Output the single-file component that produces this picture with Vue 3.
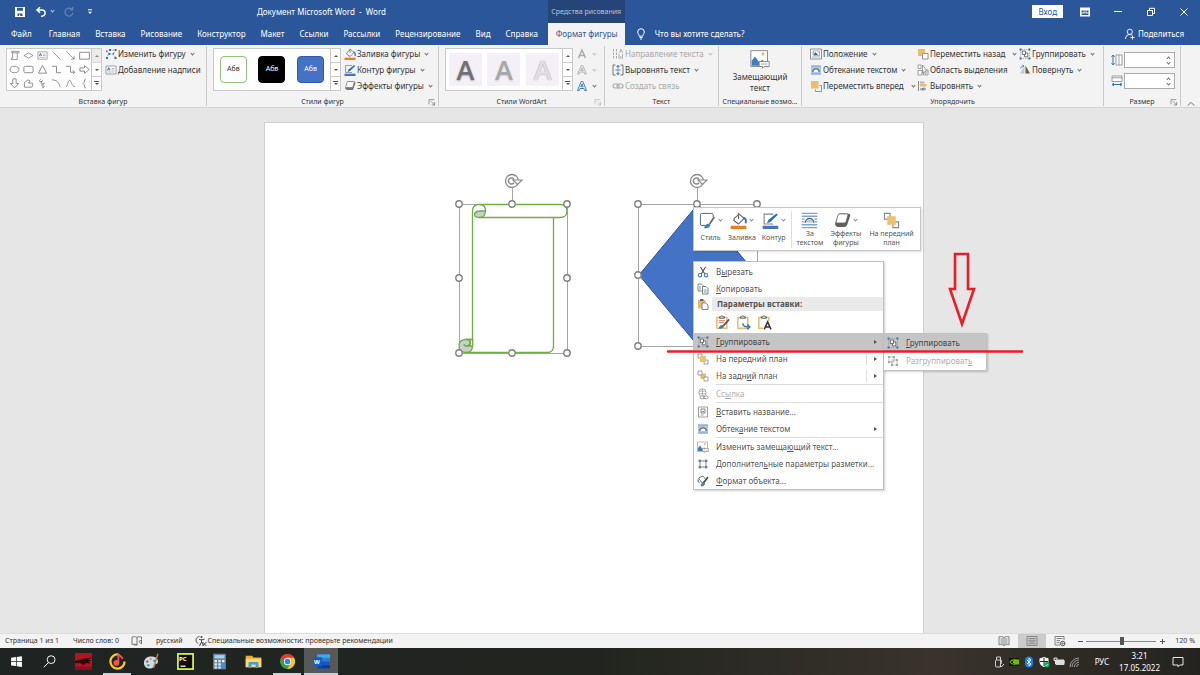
<script setup>
import { ref } from 'vue'

const icons = {
  save: '<path d="M1 1h10v10H1z" fill="#fff"/><path d="M3 1.800h6v3H3zM3.500 7.500h5V10h-5z" fill="#2b579a"/><path d="M5 8.500h1.200V11H5z" fill="#fff"/>',
  undo: '<path d="M5 1.200 2 4l3 2.800M2.300 4H7a3 3 0 0 1 0 6.200H6" fill="none" stroke="#fff" stroke-width="1.5"/>',
  redo: '<path d="M8.800 3.200A4 4 0 1 0 10 6.500M9.600 1v3H6.600" fill="none" stroke="#6484b6" stroke-width="1.2"/>',
  customize: '<path d="M4 3.800h4" stroke="#fff" stroke-width="1"/><path d="M4 5.800h4L6 8z" fill="#fff"/>',
  display: '<path d="M1 1.500h10v9H1z" fill="#fff"/><path d="M2.500 4.500h2v2h-2zM7.500 4.500h2v2h-2zM2.500 7.500h7V9h-7z" fill="#2b579a"/><path d="M6 8.500V4.500M4.500 6 6 4.500 7.500 6" stroke="#2b579a" stroke-width=".8" fill="none"/>',
  minimize: '<path d="M2 5.500h8" stroke="#fff" stroke-width="1"/>',
  restore: '<path d="M2.500 4.500h5v5h-5z" fill="none" stroke="#fff"/><path d="M4.500 4.300v-2h5v5.200h-2" fill="none" stroke="#fff"/>',
  close: '<path d="m2.500 2.500 7 7m0-7-7 7" stroke="#fff" stroke-width="1"/>',
  bulb: '<path d="M4.300 8.200C4.300 6.700 2.700 6 2.700 4a3.300 3.300 0 0 1 6.600 0c0 2-1.600 2.700-1.600 4.200z" fill="none" stroke="#fff" stroke-width="1"/><path d="M4.500 9.500h3M5 11h2" stroke="#fff"/>',
  share: '<circle cx="5.800" cy="3.800" r="2.600" fill="none" stroke="#fff" stroke-width=".9"/><path d="M1.500 11c.2-3 1.800-4.500 4.300-4.500 1 0 1.700.3 2.300.8M8.500 7.500v4M6.500 9.500h4" fill="none" stroke="#fff" stroke-width=".9"/>',
  scroll: '<path d="M3 1.500h8v1.700H9V10.500H2.500V9H4V3H3zM4 3h5" fill="none" stroke="#777" stroke-width=".8"/>',
  diamond: '<path d="m1 6 5-2.800L11 6 6 8.800z" fill="none" stroke="#777" stroke-width=".8"/>',
  textbox: '<path d="M1 2h10v8H1z" fill="#fff" stroke="#888" stroke-width=".8"/><path d="m2.500 6.500 1.300-3 1.300 3M3 5.500h1.600" fill="none" stroke="#2e74b5" stroke-width=".9"/><path d="M6.500 4.500h3M6.500 6h3M2.500 8h7" stroke="#999" stroke-width=".7"/>',
  line: '<path d="m1.500 1.500 9 9" stroke="#777" stroke-width=".8"/>',
  arrowline: '<path d="m1.500 1.500 8.500 8.500M10 6.500V10H6.500" stroke="#777" stroke-width=".8" fill="none"/>',
  rect: '<path d="M.700 2.500h10.600v7.500H.700z" fill="none" stroke="#777" stroke-width=".9"/>',
  oval: '<ellipse cx="6" cy="6" rx="4.800" ry="3.500" fill="none" stroke="#777" stroke-width=".9"/>',
  round: '<rect x="1" y="2.500" width="10" height="7" rx="1.500" fill="none" stroke="#777" stroke-width=".9"/>',
  triangle: '<path d="M6 1.500 10.500 10h-9z" fill="none" stroke="#777" stroke-width=".9"/>',
  elbow: '<path d="M1 2.500h5v7h5" fill="none" stroke="#777" stroke-width=".9"/>',
  elbowarrow: '<path d="M1 2.500h5v6.500h4.500M8.500 7l2 2-2 2" fill="none" stroke="#777" stroke-width=".9"/>',
  blockright: '<path d="M1 4.200h5V1.700L11 6l-5 4.300V7.800H1z" fill="none" stroke="#777" stroke-width=".9"/>',
  blockdown: '<path d="M4.200 1v5H1.500L6 10.800 10.500 6H7.800V1z" fill="none" stroke="#777" stroke-width=".9"/>',
  freeform: '<path d="M1.500 10V5l4-3 2 1-1.500 2.500H10c1 1 1 3.500-.5 4.500z" fill="none" stroke="#777" stroke-width=".9"/>',
  scribble: '<path d="M4 1.500c-4 3 2 3 2 1.500s-3 3-1 3.500 4-2 3-.5-4 1.500-2.500 2.500S9 7.500 7 10.500l-1.500.3" fill="none" stroke="#777" stroke-width=".9"/>',
  arc: '<path d="M1 2c5 0 8 3 9 8" fill="none" stroke="#777" stroke-width=".9"/>',
  curve: '<path d="M1 9.500c2 0 2-7 4-7s2 7 6 7" fill="none" stroke="#777" stroke-width=".9"/>',
  brace: '<path d="M7.500 1C5 1 6.500 5.500 4.500 6 6.500 6.500 5 11 7.500 11" fill="none" stroke="#777" stroke-width=".9"/>',
  editshape: '<path d="M1.500 10 4 6 2.500 3M5 2h6M11 2 8 6l3 4" fill="none" stroke="#7f8b99" stroke-width=".8" stroke-dasharray="1.500 1"/><path d="M1 9h2v2H1zM3.500 5h2v2h-2zM4 1h2v2H4zM9.500 1h2v2h-2zM7.500 5h1.500v1.500H7.500zM9.500 9h2v2h-2zM1 2.500h1.500V4H1z" fill="#2e74b5"/>',
  bucket: '<path d="M3 4.500 6.500 1.500l3.500 3L6 8.500 2.700 6z" fill="#fff" stroke="#666" stroke-width=".8"/><path d="M6 5V.700" stroke="#666" stroke-width=".8"/><path d="M9.500 4c1.500.5 2 2 1.500 4" stroke="#2e74b5" stroke-width="1.300" fill="none"/><path d="M.5 9.700h11v2.300H.5z" fill="#ee7d1e"/>',
  pen: '<path d="M8 1.500H1.500V8.500H8" fill="none" stroke="#888" stroke-width=".8"/><path d="m3.500 8 1-2.500 5.700-4.500 1 1L6 7z" fill="#2e74b5"/><path d="M.5 9.700h11v2.300H.5z" fill="#4472c4"/>',
  effects: '<path d="M4 1.500h6.500L11.500 3 9 10H3L1 8.500z" fill="#777"/><path d="M4 1.500h5.500q1 0 .7 1L9 6.500q-.3 1-1.300 1H2.500q-1 0-.7-1L3 2.500q.2-1 1-1z" fill="#fff" stroke="#777" stroke-width=".8"/>',
  wafill: '<path d="M2.500 10 6 2l3.500 8M4 7.500h4" fill="none" stroke="#aaa" stroke-width="1.500"/>',
  waline: '<path d="M1.500 10 5.200 1.500h1.600L10.500 10H8.700L8 8H4l-.7 2zM4.800 6.500h2.400L6 3.800z" fill="#eee" stroke="#aaa" stroke-width=".8"/>',
  waglow: '<path d="M1.500 10.500 5.200 1.500h1.600L10.500 10.500H8.700L8 8.500H4l-.7 2zM4.800 6.800h2.400L6 3.800z" fill="#fff" stroke="#3f7dc1" stroke-width="1"/>',
  direction: '<path d="M1.500 1v10M4.500 1v10" stroke="#aaa" stroke-dasharray="2.500 1"/><path d="M7.500 5 9 1l1.500 4M7 11V6M10.500 6v5M8.800 11V8" fill="none" stroke="#aaa" stroke-width=".9"/>',
  aligntext: '<path d="M3.500 1H1v10h2.500M8.500 1H11v10H8.500" fill="none" stroke="#666" stroke-width=".9"/><path d="M6 1v3.500M6 11V7.500M4.500 3 6 1.500 7.500 3M4.500 9 6 10.500 7.500 9" fill="none" stroke="#2e74b5"/><path d="M3.500 6h5" stroke="#666"/>',
  link: '<rect x="1" y="4" width="6" height="4" rx="2" fill="none" stroke="#aaa" stroke-width="1.200"/><rect x="5" y="4" width="6" height="4" rx="2" fill="none" stroke="#aaa" stroke-width="1.200"/>',
  alttext: '<path d="M.5 1h10v9.500H.5z" fill="#fff" stroke="#777" stroke-width=".5"/><path d="M1 10V7l2-2.500L5.500 8l1.800-1.500L9 8v2z" fill="#3f7dc1"/><circle cx="7.800" cy="3" r="1" fill="#eebb6c"/><path d="M5.500 7.500h6v3h-3l-1 1v-1h-2z" fill="#fff" stroke="#777" stroke-width=".5"/><path d="M6.500 9h4" stroke="#999" stroke-width=".5"/>',
  position: '<path d="M.5 1h11v10H.5z" fill="#fff" stroke="#777" stroke-width=".8"/><path d="M2 4h1M2 6h1M2 9h8" stroke="#999" stroke-width=".8"/><path d="M3.500 2.800h6v4.700h-6z" fill="#fff" stroke="#6a9bd0" stroke-width=".7"/><path d="M4 7V5.500L5.500 4 8 7z" fill="#2e74b5"/><circle cx="8" cy="4" r=".7" fill="#eebb6c"/>',
  wrap: '<path d="M1 1.500h10v9H1z" fill="#a9c5e6"/><path d="M1 2h10M1 10h10" stroke="#7ea6d4"/><path d="M3 8V6.500Q6 3 9 6.500V8" fill="#fff" stroke="#555" stroke-width="1.100"/>',
  forward: '<path d="M1 1h7.500v7.500H1z" fill="#eebb6c"/><path d="M9.500 5.500H11.500V11.500H5.500V9.500" fill="none" stroke="#888" stroke-width=".9"/>',
  backward: '<path d="M1 1h7v4H5v3H1z" fill="#eebb6c"/><path d="M5.500 5.500H11V11H5.500z" fill="#fff" stroke="#888" stroke-width=".9"/>',
  pane: '<path d="M1 1h3v3.500H1zM1 6.500h4V11H1zM6.500 6h4.500v5H6.500z" fill="#fff" stroke="#888" stroke-width=".8"/><path d="M5.500 1v8l1.700-1.600L8.500 10l1-.6-1.300-2.400h2z" fill="#fff" stroke="#777" stroke-width=".7"/>',
  align: '<path d="M1.500 1v10" stroke="#888"/><path d="M3 1.500h4.500v2H3zM3 8h3.500v2.500H3z" fill="#b6b6b6"/><path d="M3 4h6.500v2.500H3z" fill="#eebb6c"/><path d="M5.500 9H9M7 7.500 5.500 9 7 10.500" stroke="#2e74b5" fill="none"/>',
  group: '<path d="M1.500 1.500h9v9h-9z" fill="none" stroke="#888" stroke-width=".6" stroke-dasharray="1 .8"/><path d="M5.500 5h3.300v3.800H5.500z" fill="#fff" stroke="#555" stroke-width=".8"/><path d="M3.300 3h3.200v3.500H3.300z" fill="#fff" stroke="#555" stroke-width=".8"/><path d="M.6.600h2v2h-2zM9.400.600h2v2h-2zM.6 9.400h2v2h-2zM9.400 9.400h2v2h-2z" fill="#2e74b5"/>',
  ungroup: '<path d="M2 2h5v5H2zM5 5h5v5H5z" fill="none" stroke="#aaa" stroke-width=".8"/><path d="M1 1h2v2H1zM6 1h2v2H6zM1 6h2v2H1zM9 4h2v2H9zM4 9h2v2H4zM9 9h2v2H9z" fill="#a4a4a4"/>',
  rotate: '<path d="M1 9.500 5.500 2v7.500z" fill="#c8c8c8"/><path d="M6.500 1.500 11 9.500H6.500z" fill="#606060"/><path d="M1.500 4.500C2 2.500 3 2 4.500 2M3.500.800l1.500 1.200-1.500 1.300" fill="none" stroke="#2e74b5" stroke-width=".8"/>',
  height: '<path d="M5 1h6v10H5zM8 1v10" fill="#fff" stroke="#888" stroke-width=".8"/><path d="M2 1.500v9M.5 3 2 1l1.500 2M.5 9 2 11l1.500-2" fill="none" stroke="#2e74b5"/>',
  width: '<path d="M1 1h10v5.500H1zM1 2.800h10" fill="#fff" stroke="#888" stroke-width=".8"/><path d="M1.500 9.500h9M3 8 1 9.500 3 11M9 8l2 1.500L9 11" fill="none" stroke="#2e74b5"/>',
  launcher: '<path d="M1.500 9.500v-7h8" fill="none" stroke="#666" stroke-width="1"/><path d="m4.500 5 5 5M10 6v4.500H5.500" fill="none" stroke="#666"/>',
  cut: '<path d="m3.500 1 4.300 7M8.500 1 4.200 8" stroke="#555" stroke-width="1.200"/><circle cx="3" cy="9.200" r="1.700" fill="none" stroke="#3f7dc1" stroke-width="1.100"/><circle cx="9" cy="9.200" r="1.700" fill="none" stroke="#3f7dc1" stroke-width="1.100"/>',
  copy: '<path d="M1 1h3.500L6 2.500V8H1z" fill="#fff" stroke="#666" stroke-width=".8"/><path d="M5.500 3.500H9L11 5.500V11H5.500z" fill="#fff" stroke="#666" stroke-width=".8"/><path d="M2 4h2M2 6h2M6.700 7h3M6.700 9h3" stroke="#3f7dc1" stroke-width=".8"/>',
  paste: '<path d="M1 2h7.500v8.500H1z" fill="#e9b96e"/><path d="M3 1h3.500v2H3z" fill="#666"/><path d="M5 5h3.500L11 7v4.500H5z" fill="#fff" stroke="#777" stroke-width=".9"/>',
  pasteformat: '<path d="M1.500 2h8v8.500h-8z" fill="#fff" stroke="#e9b96e" stroke-width="1.200"/><path d="M3.500 2.500v-1h1L5.500.400l1 1.100h1v1z" fill="#fff" stroke="#555" stroke-width=".8"/><path d="M3 4.500h5M3 6h4" stroke="#ea8e7a"/><path d="m11.300 3.500-4.500 5" stroke="#555" stroke-width="1.400"/><path d="M3 11c0-2 1.500-3.500 4-3l.5 1C6 11 5 11 3 11z" fill="#3f7dc1"/>',
  pastemerge: '<path d="M1.500 2h8v8.500h-8z" fill="#fff" stroke="#e9b96e" stroke-width="1.200"/><path d="M3.500 2.500v-1h1L5.500.400l1 1.100h1v1z" fill="#fff" stroke="#555" stroke-width=".8"/><path d="M5.500 6.500c0 2.500 1.500 3 5 3M9 7.500l2 2-2 2" fill="none" stroke="#3f7dc1" stroke-width="1.300"/>',
  pastetext: '<path d="M1.500 2h8v8.500h-8z" fill="#fff" stroke="#e9b96e" stroke-width="1.200"/><path d="M3.500 2.500v-1h1L5.500.400l1 1.100h1v1z" fill="#fff" stroke="#555" stroke-width=".8"/><path d="M5 5h7v7H5z" fill="#fff"/><path d="m5.800 11.500 2.700-6 2.700 6M6.800 9.500h3.400" fill="none" stroke="#333" stroke-width="1.200"/>',
  tofront: '<path d="M1 1h4v4H1zM7 7h4v4H7z" fill="#fff" stroke="#888" stroke-width=".8"/><path d="M3 3h6v6H3z" fill="#edbf6e"/>',
  toback: '<path d="M3.500 3.500h5.500v5.500H3.500z" fill="#eebb6c"/><path d="M1 1h4v4H1zM7 7h4v4H7z" fill="#fff" stroke="#888" stroke-width=".8"/>',
  hyperlink: '<circle cx="5.500" cy="4.500" r="3.700" fill="none" stroke="#999" stroke-width=".8"/><path d="M2 3.200h7M2 5.800h7M5.500 1v7" stroke="#999" stroke-width=".7"/><path d="M2.500 7.500h8.500v3.500H2.500z" fill="#fff"/><rect x="3" y="8" width="4.500" height="2.700" rx="1.300" fill="none" stroke="#999"/><rect x="6.500" y="8" width="4.500" height="2.700" rx="1.300" fill="none" stroke="#999"/>',
  caption: '<path d="M1.500 1h9v10h-9z" fill="#fff" stroke="#888" stroke-width=".8"/><path d="M4 3h4v4H4z" fill="none" stroke="#666" stroke-width=".8"/><path d="M3.500 9h3" stroke="#888" stroke-width=".8"/><path d="M5 5.500h2" stroke="#c0504d" stroke-width=".8"/>',
  layout: '<path d="M1 3h10M1 9h10M3 1v10M9 1v10" stroke="#666" stroke-width=".8"/><path d="M2 2h2v2H2zM8 2h2v2H8zM2 8h2v2H2zM8 8h2v2H8z" fill="#5b87b8"/>',
  format: '<path d="M1.500 3 6 1l3 4-4 3z" fill="#fff" stroke="#666" stroke-width=".9"/><path d="M11 2 6.500 8" stroke="#444" stroke-width="1.500"/><path d="M1 4c-.5 3 .5 3.500 1.500 3.500M4 11c0-2 1-3.500 3-3l.7 1C7 11 6 11 4 11z" fill="#3f7dc1" stroke="#3f7dc1" stroke-width=".6"/>',
  style: '<path d="M5 9.500H2q-1 0-1-1V2q0-1 1-1h7q1 0 1 1v1.500" fill="none" stroke="#666" stroke-width=".7"/><path d="m10.800 3.500-3.300 5" stroke="#666" stroke-width="1.200"/><path d="M3.500 11.500C4 9.500 5.500 8 7.300 8.300l.8.800C7.500 11 6 11.500 3.500 11.500z" fill="#3f7dc1"/>',
  behind: '<path d="M.5 1h11M.5 3h11M.5 5h2M9.500 5h2M.5 7h2M9.500 7h2M.5 9h11M.5 11h11" stroke="#76a5d6" stroke-width=".9"/><path d="M3 7.500a3 3 0 0 1 6 0" fill="#b7cde5" stroke="#666" stroke-width=".9"/>',
  bevel: '<path d="M3.500 1h6q2 0 2 1.500L9.500 8.500Q9 10.500 7 10.500H2.500Q.5 10 .8 8z" fill="#606060"/><path d="M4 1.300h5q1 0 .8 1L8.500 6.800q-.3 1-1.300 1H2.300q-1 0-.8-1L2.800 2.300q.3-1 1.200-1z" fill="#fff" stroke="#666" stroke-width=".6"/>',
  proof: '<path d="M6 2.500C4.500 1.500 2.500 1.500 1 2v7.500c1.500-.5 3.500-.5 5 .5V2.500c1-.7 2-1 4.500-.5v2.500M3 10h3" fill="none" stroke="#555" stroke-width=".8"/><path d="M8 6.500 10.500 5v4z" fill="none" stroke="#555" stroke-width=".8"/>',
  access: '<path d="M4.500 1.500C2 1.800 1 3.500 1 5s.8 3 2.500 3.800" fill="none" stroke="#555"/><circle cx="6.500" cy="2" r="1" fill="#444"/><path d="M4 4.200c2 .7 3.500.7 5.500 0M6.500 4.500V7L4.500 11M6.500 7l2.500 4M7.500 7l4 4M11.500 7l-4 4" fill="none" stroke="#444"/>',
  read: '<path d="M6 2.500v8M6 2.500C4.500 1.500 3 1.500 1 1.800v8c2-.3 3.500-.3 5 .7 1.500-1 3-1 5-.7v-8c-2-.3-3.500-.3-5 .7zM2.500 4H5M2.500 6H5M2.500 8H5M7 4h2.500M7 6h2.500M7 8h2.500" fill="none" stroke="#666" stroke-width=".8"/>',
  print: '<path d="M1 1.500h10v9H1zM2.500 3.500h7M2.500 5.300h7M2.500 7h7M2.500 8.800h7" fill="none" stroke="#777" stroke-width=".8"/>',
  web: '<path d="M6 10H1V1.500h9V5M2.500 3.500h6M2.500 5.500H6M2.500 7.500h3" fill="none" stroke="#666" stroke-width=".8"/><circle cx="8.700" cy="8.500" r="2.300" fill="#fff" stroke="#555"/><path d="M6.500 8.500h4.500M8.700 6.500v4" stroke="#555" stroke-width=".6"/>',
  windows: '<path d="M1 2.500 5.500 1.900v3.800H1zM6.200 1.800 11 1.100v4.600H6.200zM1 6.400h4.500v3.800L1 9.600zM6.200 6.400H11V11l-4.800-.7z" fill="#fff"/>',
  search: '<circle cx="7.500" cy="4.300" r="3.600" fill="none" stroke="#fff" stroke-width=".9"/><path d="M5 7 .800 11.300" stroke="#fff" stroke-width=".9"/>',
  raven: '<path d="M0 0h12v12H0z" fill="#b51222"/><path d="M0 6c1.500-1.500 3-1 4.500-1.500C7 3.200 9 4 12 3L9.500 4.800l2 .7-2 .5 1.500 1.600L8 7 6 8.500 4 7.300 0 7z" fill="#2b0509"/><path d="M0 9.500h12V12H0z" fill="#8d0d19"/>',
  music: '<path d="M6.500 1A5 5 0 1 0 11 6" fill="none" stroke="#ffcc1e" stroke-width="1.600"/><circle cx="5.200" cy="7" r="2" fill="#f2534a"/><path d="M6.600 7V.500C7 2.300 9.500 2 9.500 4.300" fill="none" stroke="#f2534a" stroke-width="1.300"/>',
  paint: '<path d="M.700 7c0-3 2.500-5 5.800-4.500 3 .5 4.500 2 4 4-.3 1.500-2 1-2.500 2-.7 1.300-1 2.500-3 2.500C2.500 11 .700 9.500.700 7z" fill="#c7dfee"/><circle cx="3" cy="6" r=".9" fill="#e2503c"/><circle cx="5.500" cy="4.300" r=".9" fill="#f0a62a"/><circle cx="3.700" cy="8.700" r=".9" fill="#54a855"/><circle cx="8" cy="5.500" r=".8" fill="#357bc8"/><path d="M10.500.500 7.500 10.500" stroke="#bd7a3b" stroke-width="1.100"/>',
  calc: '<path d="M1.500.500h9v11h-9z" fill="#68829a"/><path d="M2.500 1.500h7v2.300h-7z" fill="#9fd3f0"/><path d="M2.500 5h1.700v1.500H2.500zM5.200 5h1.700v1.500H5.200zM2.500 7.300h1.700v1.500H2.500zM5.200 7.300h1.700v1.500H5.200zM2.500 9.500h1.700V11H2.500zM5.200 9.500h1.700V11H5.200zM7.800 5h1.700v1.500H7.800z" fill="#e4edf4"/><path d="M7.800 7.300h1.700V11H7.800z" fill="#3496dd"/>',
  folder: '<path d="M.5 2h4.500l1 1.200h5.500V10H.5z" fill="#e9ae36"/><path d="M.5 4h11v6H.5z" fill="#fbd775"/><path d="M2.500 10.500V7q0-.7.700-.7h5.600q.7 0 .7.700v3.500h-2V8.200h-3v2.300z" fill="#3d9fdc"/>',
  chrome: '<circle cx="6" cy="6" r="5.300" fill="#34a04d"/><path d="M1.400 3.300A5.300 5.300 0 0 1 10.600 3.300H6L3.700 7.300z" fill="#e23c31"/><path d="M10.600 3.300A5.300 5.300 0 0 1 5.800 11.300L8.300 7.300 6 3.300z" fill="#fbc41e"/><circle cx="6" cy="6" r="2.600" fill="#fff"/><circle cx="6" cy="6" r="2" fill="#3b7de6"/>',
  usb: '<path d="M3.500 4h4v7h-4q-1 0-1-1V5q0-1 1-1zM3.500 4V1h4v3h.8v4" fill="none" stroke="#ddd" stroke-width=".9"/><path d="m7 9.500 1.300 1.500L11 8" fill="none" stroke="#ddd"/>',
  nvidia: '<path d="M1 2h10v8H1z" fill="#101a08"/><path d="M2 6c1.500-2.500 5-3 8-.5C8 9 4 9 2 6z" fill="none" stroke="#76b900" stroke-width="1.100"/><path d="M6 3.500h5v5H6z" fill="#76b900"/><circle cx="6" cy="6" r="1.300" fill="#76b900"/>',
  bluetooth: '<rect x="2" y=".5" width="8" height="11" rx="4" fill="#1281e8"/><path d="m4 4 4 4-2 2V2l2 2-4 4" fill="none" stroke="#fff" stroke-width=".9"/>',
  shield: '<path d="M6 1l4.500 1.500v3C10.500 8.500 8 10.500 6 11 4 10.500 1.500 8.500 1.500 5.500v-3z" fill="#fff"/><path d="M6 2v8M2 5.500h8" stroke="#25251f"/><circle cx="8.800" cy="8.800" r="2.700" fill="#18a45a"/><path d="m7.500 8.800 1 1 1.700-1.800" stroke="#fff" fill="none" stroke-width=".8"/>',
  battery: '<path d="M3 4h8v4.500H3z" fill="#ddd" stroke="#ddd"/><path d="M11.500 5.500h.5v1.500h-.5z" fill="#ddd"/><path d="M1 2h3v2.500H1zM2.500 4.500V8" stroke="#fff" fill="#555" stroke-width=".8"/>',
  wifi: '<path d="M2 11A9 9 0 0 1 11 2M4 11a7 7 0 0 1 7-7M6.300 11A4.700 4.700 0 0 1 11 6.300M8.500 11A2.500 2.500 0 0 1 11 8.500" fill="none" stroke="#bbb" stroke-width=".8"/>',
  notice: '<path d="M1 1.500h10v7.500H7.500L6 10.700V9H1z" fill="none" stroke="#fff" stroke-width=".9"/>',
  pycharm: '<path d="M0 0h12v12H0z" fill="#cfe84a"/><path d="M1.300 1.300h9.400v9.400H1.300z" fill="#0b0b0b"/><path d="M2.500 9.300h3.500" stroke="#fff" stroke-width=".9"/>',
  word: '<path d="M3 1h9v10H3z" fill="#2b7cd3"/><path d="M3 1h9v2.500H3z" fill="#41a5ee"/><path d="M3 8.500h9V11H3z" fill="#103f91"/><path d="M3 6h9v2.500H3z" fill="#185abd"/><path d="M0 3h6.500v6.500H0z" fill="#185abd"/>'
}

const tabs = ['Главная', 'Вставка', 'Рисование', 'Конструктор', 'Макет', 'Ссылки', 'Рассылки', 'Рецензирование', 'Вид', 'Справка']
const shapes = ['scroll', 'diamond', 'textbox', 'line', 'arrowline', 'rect', 'oval', 'round', 'triangle', 'elbow', 'elbowarrow', 'blockright', 'blockdown', 'freeform', 'scribble', 'arc', 'curve', 'brace']
const insertCmds = [{ icon: 'editshape', text: 'Изменить фигуру', arrow: true }, { icon: 'textbox', text: 'Добавление надписи' }]
const styleCmds = [{ icon: 'bucket', text: 'Заливка фигуры', arrow: true }, { icon: 'pen', text: 'Контур фигуры', arrow: true }, { icon: 'effects', text: 'Эффекты фигуры', arrow: true }]
const wordArtCmds = [{ icon: 'wafill', label: 'Заливка текста', off: true }, { icon: 'waline', label: 'Контур текста', off: true }, { icon: 'waglow', label: 'Текстовые эффекты' }]
const textCmds = [{ icon: 'direction', text: 'Направление текста', arrow: true, off: true }, { icon: 'aligntext', text: 'Выровнять текст', arrow: true }, { icon: 'link', text: 'Создать связь', off: true }]
const arrange = [
  [{ icon: 'position', text: 'Положение', arrow: true }, { icon: 'wrap', text: 'Обтекание текстом', arrow: true }, { icon: 'forward', text: 'Переместить вперед', arrow: true, split: true }],
  [{ icon: 'backward', text: 'Переместить назад', arrow: true, split: true }, { icon: 'pane', text: 'Область выделения' }, { icon: 'align', text: 'Выровнять', arrow: true }],
  [{ icon: 'group', text: 'Группировать', arrow: true }, { icon: 'rotate', text: 'Повернуть', arrow: true }]
]
const mini = [
  { icon: 'style', lines: ['Стиль'], arrow: true },
  { icon: 'bucket', lines: ['Заливка'], arrow: true },
  { icon: 'pen', lines: ['Контур'], arrow: true },
  { icon: 'behind', lines: ['За', 'текстом'], first: true },
  { icon: 'bevel', lines: ['Эффекты', 'фигуры'], arrow: true },
  { icon: 'tofront', lines: ['На передний', 'план'] }
]
/* each label is split as [before, access key, after] */
const menuTop = [
  { icon: 'cut', t: ['В', 'ы', 'резать'] },
  { icon: 'copy', t: ['', 'К', 'опировать'] }
]
const menuRest = [
  { icon: 'group', t: ['', 'Г', 'руппировать'], sub: true, on: true },
  { icon: 'tofront', t: ['На пере', 'д', 'ний план'], sub: true, split: true },
  { icon: 'toback', t: ['На задн', 'и', 'й план'], sub: true, split: true },
  { icon: 'hyperlink', t: ['Сс', 'ы', 'лка'], off: true, sep: true },
  { icon: 'caption', t: ['', 'В', 'ставить название...'], sep: true },
  { icon: 'wrap', t: ['Обтек', 'а', 'ние текстом'], sub: true },
  { icon: 'alttext', t: ['Изменить замеща', 'ю', 'щий текст...'], sep: true },
  { icon: 'layout', t: ['Дополнител', 'ь', 'ные параметры разметки...'] },
  { icon: 'format', t: ['', 'Ф', 'ормат объекта...'] }
]
const submenu = [
  { icon: 'group', t: ['', 'Г', 'руппировать'], on: true },
  { icon: 'ungroup', t: ['Разгруппироват', 'ь', ''], off: true }
]
const apps = [
  { icon: 'windows', name: 'Пуск' },
  { icon: 'search', name: 'Поиск' },
  { icon: 'raven', name: 'Игра', big: true },
  { icon: 'music', name: 'Музыка', big: true, run: true },
  { icon: 'paint', name: 'Paint', big: true },
  { icon: 'pycharm', name: 'PyCharm', big: true, mark: 'PC' },
  { icon: 'calc', name: 'Калькулятор', big: true },
  { icon: 'folder', name: 'Проводник', big: true },
  { icon: 'chrome', name: 'Chrome', big: true, run: true },
  { icon: 'word', name: 'Word', big: true, active: true, mark: 'W' }
]
const tray = ['usb', 'nvidia', 'bluetooth', 'shield', 'battery', 'wifi']
const handles = [[195, 82], [248, 82], [303, 82], [195, 156], [303, 156], [195, 231], [248, 231], [303, 231], [374, 82], [433, 82], [493, 82], [374, 153], [374, 224]]
const zoom = ref(120)
const heightValue = ref('')
const widthValue = ref('')
</script>

<template>
  <div class="app">
    <header class="head">
      <div class="title-row">
        <div class="quick">
          <button aria-label="Сохранить"><svg class="ic" viewBox="0 0 12 12" v-html="icons.save" /></button>
          <button aria-label="Отменить"><svg class="ic" viewBox="0 0 12 12" v-html="icons.undo" /><i class="chev" /></button>
          <button aria-label="Повторить"><svg class="ic" viewBox="0 0 12 12" v-html="icons.redo" /></button>
          <button aria-label="Настройка панели"><svg class="ic" viewBox="0 0 12 12" v-html="icons.customize" /></button>
        </div>
        <div class="doc-title">Документ Microsoft Word&nbsp; -&nbsp; Word</div>
        <div class="window-tools">
          <button class="login">Вход</button>
          <button v-for="n in ['display', 'minimize', 'restore', 'close']" :key="n" class="win" :aria-label="n">
            <svg class="ic" viewBox="0 0 12 12" v-html="icons[n]" />
          </button>
        </div>
      </div>
      <nav class="tabs">
        <button class="tab file">Файл</button>
        <button v-for="t in tabs" :key="t" class="tab">{{ t }}</button>
        <div class="context">
          <span class="context-name">Средства рисования</span>
          <button class="context-tab">Формат фигуры</button>
        </div>
        <button class="tell"><svg class="ic" viewBox="0 0 12 12" v-html="icons.bulb" />Что вы хотите сделать?</button>
        <button class="share"><svg class="ic" viewBox="0 0 12 12" v-html="icons.share" />Поделиться</button>
      </nav>
    </header>

    <section class="ribbon">
      <div class="rgroup">
        <div class="rbody">
          <div class="gallery">
            <div class="shapes">
              <button v-for="s in shapes" :key="s" :aria-label="s"><svg class="ic small" viewBox="0 0 12 12" v-html="icons[s]" /></button>
            </div>
            <div class="scroller"><button class="dim" aria-label="Вверх"><i class="tri up" /></button><button aria-label="Вниз"><i class="tri" /></button><button aria-label="Ещё"><i class="tri more" /></button></div>
          </div>
          <div class="cmds">
            <button v-for="c in insertCmds" :key="c.text" class="cmd"><svg class="ic" viewBox="0 0 12 12" v-html="icons[c.icon]" />{{ c.text }}<i v-if="c.arrow" class="chev" /></button>
          </div>
        </div>
        <div class="rlabel">Вставка фигур</div>
      </div>

      <div class="rgroup">
        <div class="rbody">
          <div class="gallery wide">
            <div class="styles">
              <button class="preset outline">Абв</button>
              <button class="preset black">Абв</button>
              <button class="preset blue">Абв</button>
            </div>
            <div class="scroller"><button aria-label="Вверх"><i class="tri up" /></button><button aria-label="Вниз"><i class="tri" /></button><button aria-label="Ещё"><i class="tri more" /></button></div>
          </div>
          <div class="cmds">
            <button v-for="c in styleCmds" :key="c.text" class="cmd"><svg class="ic" viewBox="0 0 12 12" v-html="icons[c.icon]" />{{ c.text }}<i class="chev" /></button>
          </div>
        </div>
        <div class="rlabel">Стили фигур<button class="launch" aria-label="Параметры стиля"><svg viewBox="0 0 12 12" v-html="icons.launcher" /></button></div>
      </div>

      <div class="rgroup">
        <div class="rbody">
          <div class="gallery wide">
            <div class="arts">
              <button class="art a1">A</button>
              <button class="art a2">A</button>
              <button class="art a3">A</button>
            </div>
            <div class="scroller"><button aria-label="Вверх"><i class="tri up" /></button><button aria-label="Вниз"><i class="tri" /></button><button aria-label="Ещё"><i class="tri more" /></button></div>
          </div>
          <div class="cmds">
            <button v-for="c in wordArtCmds" :key="c.icon" class="cmd" :class="{ off: c.off }" :aria-label="c.label"><svg class="ic" viewBox="0 0 12 12" v-html="icons[c.icon]" /><i class="chev" /></button>
          </div>
        </div>
        <div class="rlabel">Стили WordArt<button class="launch faint" aria-label="Параметры WordArt"><svg viewBox="0 0 12 12" v-html="icons.launcher" /></button></div>
      </div>

      <div class="rgroup">
        <div class="rbody">
          <div class="cmds flush">
            <button v-for="c in textCmds" :key="c.text" class="cmd" :class="{ off: c.off }"><svg class="ic" viewBox="0 0 12 12" v-html="icons[c.icon]" />{{ c.text }}<i v-if="c.arrow" class="chev" /></button>
          </div>
        </div>
        <div class="rlabel">Текст</div>
      </div>

      <div class="rgroup">
        <div class="rbody centered">
          <button class="tall"><svg viewBox="0 0 12 12" v-html="icons.alttext" /><span>Замещающий<br>текст</span></button>
        </div>
        <div class="rlabel">Специальные возмо...</div>
      </div>

      <div class="rgroup">
        <div class="rbody arrange">
          <div v-for="(col, i) in arrange" :key="i" class="cmds flush">
            <button v-for="c in col" :key="c.text" class="cmd"><svg class="ic" viewBox="0 0 12 12" v-html="icons[c.icon]" />{{ c.text }}<i v-if="c.arrow" class="chev" :class="{ split: c.split }" /></button>
          </div>
        </div>
        <div class="rlabel">Упорядочить</div>
      </div>

      <div class="rgroup">
        <div class="rbody sizes">
          <label><svg class="ic" viewBox="0 0 12 12" v-html="icons.height" /><span class="spin"><input v-model="heightValue" type="text" aria-label="Высота"><span class="steps"><i class="chev up" /><i class="chev" /></span></span></label>
          <label><svg class="ic" viewBox="0 0 12 12" v-html="icons.width" /><span class="spin"><input v-model="widthValue" type="text" aria-label="Ширина"><span class="steps"><i class="chev up" /><i class="chev" /></span></span></label>
        </div>
        <div class="rlabel">Размер<button class="launch" aria-label="Параметры размера"><svg viewBox="0 0 12 12" v-html="icons.launcher" /></button></div>
      </div>
      <button class="collapse" aria-label="Свернуть ленту"><svg viewBox="0 0 12 12"><path d="m2 8 4-4 4 4" fill="none" stroke="#555" /></svg></button>
    </section>

    <main class="workspace">
      <div class="page">
        <svg class="canvas" width="660" height="400" viewBox="0 0 660 400">
          <g fill="none" stroke="#a6a6a6">
            <path d="M195.500 82.500h108v149h-108zM248.500 82.500v-18M374.500 82.500h119v142h-119zM433.500 82.500v-18" />
          </g>
          <g fill="none" stroke="#70ad47" stroke-width="1.300">
            <path d="M208.500 224V89q0-6.500 7-6.500H296q7 0 7 6.500t-7 6.500h-6.500V224q0 6.500-6.500 6.500h-81" fill="#fff" />
            <path d="M289.500 95.500H215M215.500 82.500q6 0 6 6.500" />
            <path d="M221.500 89H217q-6.500 0-6.500 3.300 0 3.200 4.500 3.200 6.500 0 6.500-6.500z" fill="#cdcdcd" />
            <path d="M208.500 217.500H202q-7 0-7 6.500t7 6.500q6.500 0 6.500-6.500z" fill="#cdcdcd" />
            <path d="M202 217.500q5 0 4.500 3.500 0 3-4.500 3h6.500v-6.500z" fill="#fff" />
            <path d="M202 217.500q4 0 4 3t-4 3.500q-2 0-2-2" fill="#cdcdcd" />
          </g>
          <path d="m375 153 59-71 59 71-59 71z" fill="#4472c4" stroke="#2f528f" />
          <g v-for="x in [248, 433]" :key="x" fill="none">
            <circle :cx="x" cy="59" r="6.500" fill="#fff" stroke="#8a8a8a" stroke-width="1.300" />
            <path :d="`M${x + 2} 57.500a3 3 0 1 0 0 3`" stroke="#8a8a8a" stroke-width="1.500" />
            <path :d="`M${x + 1} 58h9l-4.500 4.500z`" fill="#fff" stroke="#8a8a8a" stroke-width="1.200" />
          </g>
          <circle v-for="(p, i) in handles" :key="i" :cx="p[0]" :cy="p[1]" r="3.200" fill="#fff" stroke="#828282" stroke-width="1.400" />
        </svg>

        <div class="mini">
          <button v-for="m in mini" :key="m.icon" :class="{ first: m.first }">
            <span class="pic"><svg viewBox="0 0 12 12" v-html="icons[m.icon]" /><i v-if="m.arrow" class="chev" /></span>
            <span class="cap" :class="{ one: m.lines.length === 1 }"><template v-for="(l, i) in m.lines" :key="l"><br v-if="i">{{ l }}</template></span>
          </button>
        </div>

        <div class="menu" role="menu">
          <button v-for="m in menuTop" :key="m.icon" class="item" role="menuitem"><svg class="ic" viewBox="0 0 12 12" v-html="icons[m.icon]" /><span>{{ m.t[0] }}<u>{{ m.t[1] }}</u>{{ m.t[2] }}</span></button>
          <div class="item caption"><svg class="ic" viewBox="0 0 12 12" v-html="icons.paste" /><b>Параметры вставки:</b></div>
          <div class="pastes">
            <button v-for="p in ['pasteformat', 'pastemerge', 'pastetext']" :key="p" :aria-label="p"><svg viewBox="0 0 12 12" v-html="icons[p]" /></button>
          </div>
          <template v-for="m in menuRest" :key="m.icon">
            <div v-if="m.sep" class="sep" />
            <button class="item" :class="{ on: m.on, off: m.off }" role="menuitem"><svg class="ic" viewBox="0 0 12 12" v-html="icons[m.icon]" /><span>{{ m.t[0] }}<u>{{ m.t[1] }}</u>{{ m.t[2] }}</span><i v-if="m.sub" class="more-arrow" :class="{ split: m.split }" /></button>
          </template>
        </div>

        <div class="menu sub" role="menu">
          <button v-for="m in submenu" :key="m.icon" class="item" :class="{ on: m.on, off: m.off }" role="menuitem"><svg class="ic" viewBox="0 0 12 12" v-html="icons[m.icon]" /><span>{{ m.t[0] }}<u>{{ m.t[1] }}</u>{{ m.t[2] }}</span></button>
        </div>

        <svg class="marks" width="380" height="120" viewBox="0 0 380 120">
          <path d="M4 102.500h354" stroke="#ed1c24" stroke-width="2.500" stroke-linecap="round" />
          <path d="M291 5h13v35h6l-12 35-12-35h5z" fill="none" stroke="#ed1c24" stroke-width="2.600" />
        </svg>
      </div>
    </main>

    <footer class="status">
      <span class="pages">Страница 1 из 1</span>
      <span class="words">Число слов: 0</span>
      <button class="proof" aria-label="Правописание"><svg class="ic" viewBox="0 0 12 12" v-html="icons.proof" /></button>
      <button class="lang">русский</button>
      <button class="access"><svg class="ic" viewBox="0 0 12 12" v-html="icons.access" />Специальные возможности: проверьте рекомендации</button>
      <div class="views">
        <button v-for="v in ['read', 'print', 'web']" :key="v" :class="{ on: v === 'print' }" :aria-label="v"><svg class="ic" viewBox="0 0 12 12" v-html="icons[v]" /></button>
      </div>
      <button class="step" aria-label="Уменьшить"><i class="minus" /></button>
      <input v-model="zoom" class="zoom" type="range" min="10" max="225" aria-label="Масштаб">
      <button class="step" aria-label="Увеличить"><i class="minus plus" /></button>
      <span class="percent">120 %</span>
    </footer>

    <nav class="taskbar">
      <button v-for="a in apps" :key="a.name" class="app-btn" :class="{ run: a.run, active: a.active, big: a.big }" :aria-label="a.name">
        <svg viewBox="0 0 12 12" v-html="icons[a.icon]" /><span v-if="a.mark" class="mark" :class="a.icon">{{ a.mark }}</span>
      </button>
      <div class="tray"><svg v-for="t in tray" :key="t" class="ic" viewBox="0 0 12 12" v-html="icons[t]" /></div>
      <span class="kbd">РУС</span>
      <span class="clock">3:21<br>17.05.2022</span>
      <button class="notice" aria-label="Уведомления"><svg viewBox="0 0 12 12" v-html="icons.notice" /></button>
    </nav>
  </div>
</template>

<style>
body { margin: 0; }
</style>

<style scoped>
.app { display: flex; flex-direction: column; height: 100vh; overflow: hidden; font: 8px/12px "Noto Sans", "Open Sans", sans-serif; color: #333; background: #e6e6e6; }
.app * { box-sizing: border-box; }
button { font: inherit; color: inherit; background: none; border: 0; padding: 0; margin: 0; display: flex; align-items: center; white-space: nowrap; }
svg { display: block; flex: none; }
.ic { width: 12px; height: 12px; }
.ic.small { width: 11px; height: 11px; }
.chev { width: 3px; height: 3px; flex: none; border: solid currentColor; border-width: 0 1px 1px 0; transform: rotate(45deg); margin: -2px 0 0 4px; opacity: .7; }
.chev.up { transform: rotate(225deg); }

.head { flex: none; background: #2b579a; color: #fff; }
.title-row { display: flex; align-items: center; height: 23px; }
.quick { display: flex; align-items: center; gap: 9px; padding-left: 14px; width: 257px; }
.doc-title { flex: 1; }
.window-tools { display: flex; align-items: center; }
.login { background: #fff; color: #2b579a; height: 13px; padding: 0 6px; margin-right: 5px; }
.win { width: 33px; justify-content: center; }
.tabs { display: flex; align-items: stretch; height: 22px; }
.tab { padding: 0 7px 0 8px; }
.tab.file { padding: 0 9px 0 11px; }
.context { position: relative; display: flex; margin-left: 3px; }
.context-name { position: absolute; left: 0; right: 0; bottom: 100%; height: 23px; font-size: 7px; line-height: 23px; text-align: center; white-space: nowrap; background: #254478; color: #b7c5dc; }
.context-tab { background: #f3f3f3; color: #2b579a; padding: 0 7px 0 8px; }
.tell { margin-left: 10px; gap: 8px; }
.share { margin-left: auto; margin-right: 16px; gap: 2px; }

.ribbon { flex: none; display: grid; grid-template-columns: 207fr 232fr 166fr 114fr 83fr 302fr 77fr 19fr; height: 63px; background: #f3f3f3; border-bottom: 1px solid #d2d2d2; }
.rgroup { display: flex; flex-direction: column; margin: 1px 0 4px; border-right: 1px solid #c9c9c9; min-width: 0; }
.rbody { flex: none; display: flex; height: 48px; padding-left: 6px; }
.rbody.centered { justify-content: center; padding: 0; }
.rlabel { position: relative; text-align: center; font-size: 7px; line-height: 14px; margin-top: 1px; white-space: nowrap; height: 11px; }
.launch { position: absolute; right: 2px; top: 3px; }
.launch svg { width: 8px; height: 8px; }
.launch.faint { opacity: .45; }
.cmds { display: flex; flex-direction: column; margin-left: 3px; }
.cmds.flush { margin-left: 1px; }
.cmd { height: 16px; gap: 1px; }
.cmd.off { color: #a8a8a8; }
.chev.split { margin-left: 7px; }
.gallery { display: flex; width: 96px; height: 43px; margin-top: 2px; border: 1px solid #c9c9c9; background: #fff; }
.gallery.wide { width: 128px; }
.shapes { flex: 1; display: grid; grid-template-columns: repeat(6, 1fr); padding: 0 0 0 1px; }
.shapes button { justify-content: center; }
.scroller { width: 10px; display: flex; flex-direction: column; border-left: 1px solid #c9c9c9; }
.scroller button { flex: 1; justify-content: center; border-bottom: 1px solid #c9c9c9; }
.scroller button:last-child { border-bottom: 0; }
.scroller .dim { background: #e4e4e4; opacity: .7; }
.tri { border: 2px solid transparent; border-top-color: #555; border-bottom: 0; }
.tri.up { border-top: 0; border-bottom: 2px solid #555; }
.tri.more { position: relative; }
.tri.more::before { content: ""; position: absolute; left: -3px; top: -4px; width: 5px; height: 1px; background: #555; }
.styles, .arts { flex: 1; display: flex; align-items: center; justify-content: space-around; }
.preset { width: 27px; height: 27px; justify-content: center; border-radius: 4px; font-size: 7px; color: #fff; border: 1px solid; padding-bottom: 2px; }
.preset.outline { color: #333; border-color: #92c47d; }
.preset.black { background: #000; border-color: #000; }
.preset.blue { background: #4472c4; border-color: #2f5ca8; }
.art { width: 33px; height: 33px; background: #f5f0f7; justify-content: center; font-family: "Open Sans", sans-serif; font-size: 27px; font-weight: 600; }
.a1 { color: #707070; text-shadow: 0 1px 2px #aaa; }
.a2 { color: #a8a8a8; text-shadow: 0 1px 2px #ccc; }
.a3 { color: #e1dde1; text-shadow: 0 0 1px #888; }
.tall { flex-direction: column; padding-top: 3px; gap: 2px; line-height: 11px; }
.tall svg { width: 20px; height: 20px; }
.arrange { display: grid; grid-template-columns: 107fr 102fr 85fr; padding-left: 7px; }
.sizes { flex-direction: column; gap: 5px; padding: 6px 0 0 7px; }
.sizes label { display: flex; align-items: center; gap: 1px; }
.spin { display: flex; width: 51px; height: 16px; border: 1px solid #ababab; background: #fff; }
.spin input { flex: 1; min-width: 0; border: 0; padding: 0 2px; font: inherit; background: none; }
.steps { display: flex; flex-direction: column; justify-content: space-between; padding: 4px 4px 3px 0; }
.steps .chev { margin: 0; }
.collapse { align-self: end; justify-self: center; margin-bottom: 1px; }
.collapse svg { width: 10px; height: 10px; }

.workspace { flex: 1; min-height: 0; display: flex; justify-content: center; padding: 14px 12px 0 0; }
.page { position: relative; width: 660px; background: #fff; border: 1px solid #d0d0d0; border-bottom: 0; }
.canvas { position: absolute; left: -1px; top: -1px; }
.marks { position: absolute; left: 399px; top: 126px; pointer-events: none; }

.mini { position: absolute; left: 428px; top: 84px; display: flex; height: 44px; padding: 3px 2px 0; background: #fff; border: 1px solid #c6c6c6; box-shadow: 1px 1px 2px #0002; color: #555; font-size: 7px; }
.mini button { flex-direction: column; align-items: center; height: 37px; padding: 0 3px; line-height: 9px; }
.mini button.first { border-left: 1px solid #ddd; margin-left: 2px; padding: 0 4px 0 5px; }
.mini button:last-child { padding: 0 4px 0 5px; }
.pic { display: flex; align-items: center; justify-content: center; height: 18px; }
.pic svg { width: 17px; height: 17px; }
.pic .chev { margin-left: 3px; }
.cap { text-align: center; }
.cap.one { padding-top: 4px; }

.menu { position: absolute; left: 428px; top: 138px; width: 191px; padding: 1px 0 0 0; background: #fff; border: 1px solid #c0c0c0; box-shadow: 1px 1px 2px #0003; color: #555; }
.item { display: flex; align-items: center; width: 100%; height: 17px; padding-left: 3px; gap: 7px; }
.item span { flex: 1; text-align: left; }
.item.on { background: #c5c5c5; color: #444; }
.item.off { color: #b0b0b0; }
.item.caption { height: 14px; }
.caption b { flex: 1; align-self: stretch; margin-left: -4px; padding-left: 5px; line-height: 14px; background: #eaeaea; }
.pastes { display: flex; gap: 6px; height: 22px; padding-left: 21px; }
.pastes svg { width: 15px; height: 15px; }
.sep { height: 1px; margin-left: 22px; background: #ddd; }
.more-arrow { align-self: stretch; width: 17px; display: flex; align-items: center; padding-left: 8px; }
.more-arrow.split { background: linear-gradient(#ddd, #ddd) 0 50% / 1px 12px no-repeat; }
.more-arrow::before { content: ""; border: 2px solid transparent; border-left: 3px solid #555; border-right: 0; }
.menu.sub { left: 618px; top: 210px; width: 104px; padding: 0; }
.sub .item { height: 18px; }

.status { flex: none; display: flex; align-items: center; height: 15px; background: #f3f3f3; padding-left: 5px; border-top: 1px solid #dcdcdc; font-size: 7px; }
.words { margin-left: 14px; }
.proof { margin-left: 12px; }
.lang { margin-left: 13px; }
.access { margin-left: 12px; gap: 1px; }
.views { display: flex; align-self: stretch; margin-left: auto; }
.views button { width: 28px; justify-content: center; }
.views .on { background: #cbcbcb; }
.step { width: 12px; justify-content: center; }
.minus { position: relative; width: 5px; height: 1px; background: #555; }
.plus::after { content: ""; position: absolute; left: 2px; top: -2px; width: 1px; height: 5px; background: #555; }
.zoom { appearance: none; width: 70px; height: 8px; margin: 0; background: linear-gradient(#888, #888) 0 50% / 100% 1px no-repeat; }
.zoom::-webkit-slider-thumb { appearance: none; width: 4px; height: 8px; background: #555; }
.percent { margin: 0 5px 0 7px; }

.taskbar { flex: none; display: flex; align-items: center; height: 27px; color: #fff; background: linear-gradient(90deg, #1f2423, #22251f 50%, #39332c 78%, #24231f); }
.app-btn { position: relative; width: 33px; height: 27px; justify-content: center; }
.app-btn.big { width: 34px; }
.app-btn svg { width: 13px; height: 13px; }
.app-btn.big svg { width: 17px; height: 17px; }
.run::after, .active::after { content: ""; position: absolute; left: 3px; right: 3px; bottom: 0; height: 2px; background: #c9cfd2; }
.active { background: #565957; }
.active::after { left: 0; right: 0; }
.mark { position: absolute; font-weight: 700; font-size: 6px; line-height: 8px; left: 11px; top: 7px; }
.mark.word { left: 10px; top: 10px; }
.tray { display: flex; gap: 3px; margin-left: auto; }
.kbd { margin-left: 15px; }
.clock { margin-left: 10px; text-align: center; }
.notice { margin: 0 16px 0 12px; }
.notice svg { width: 12px; height: 12px; }
</style>
